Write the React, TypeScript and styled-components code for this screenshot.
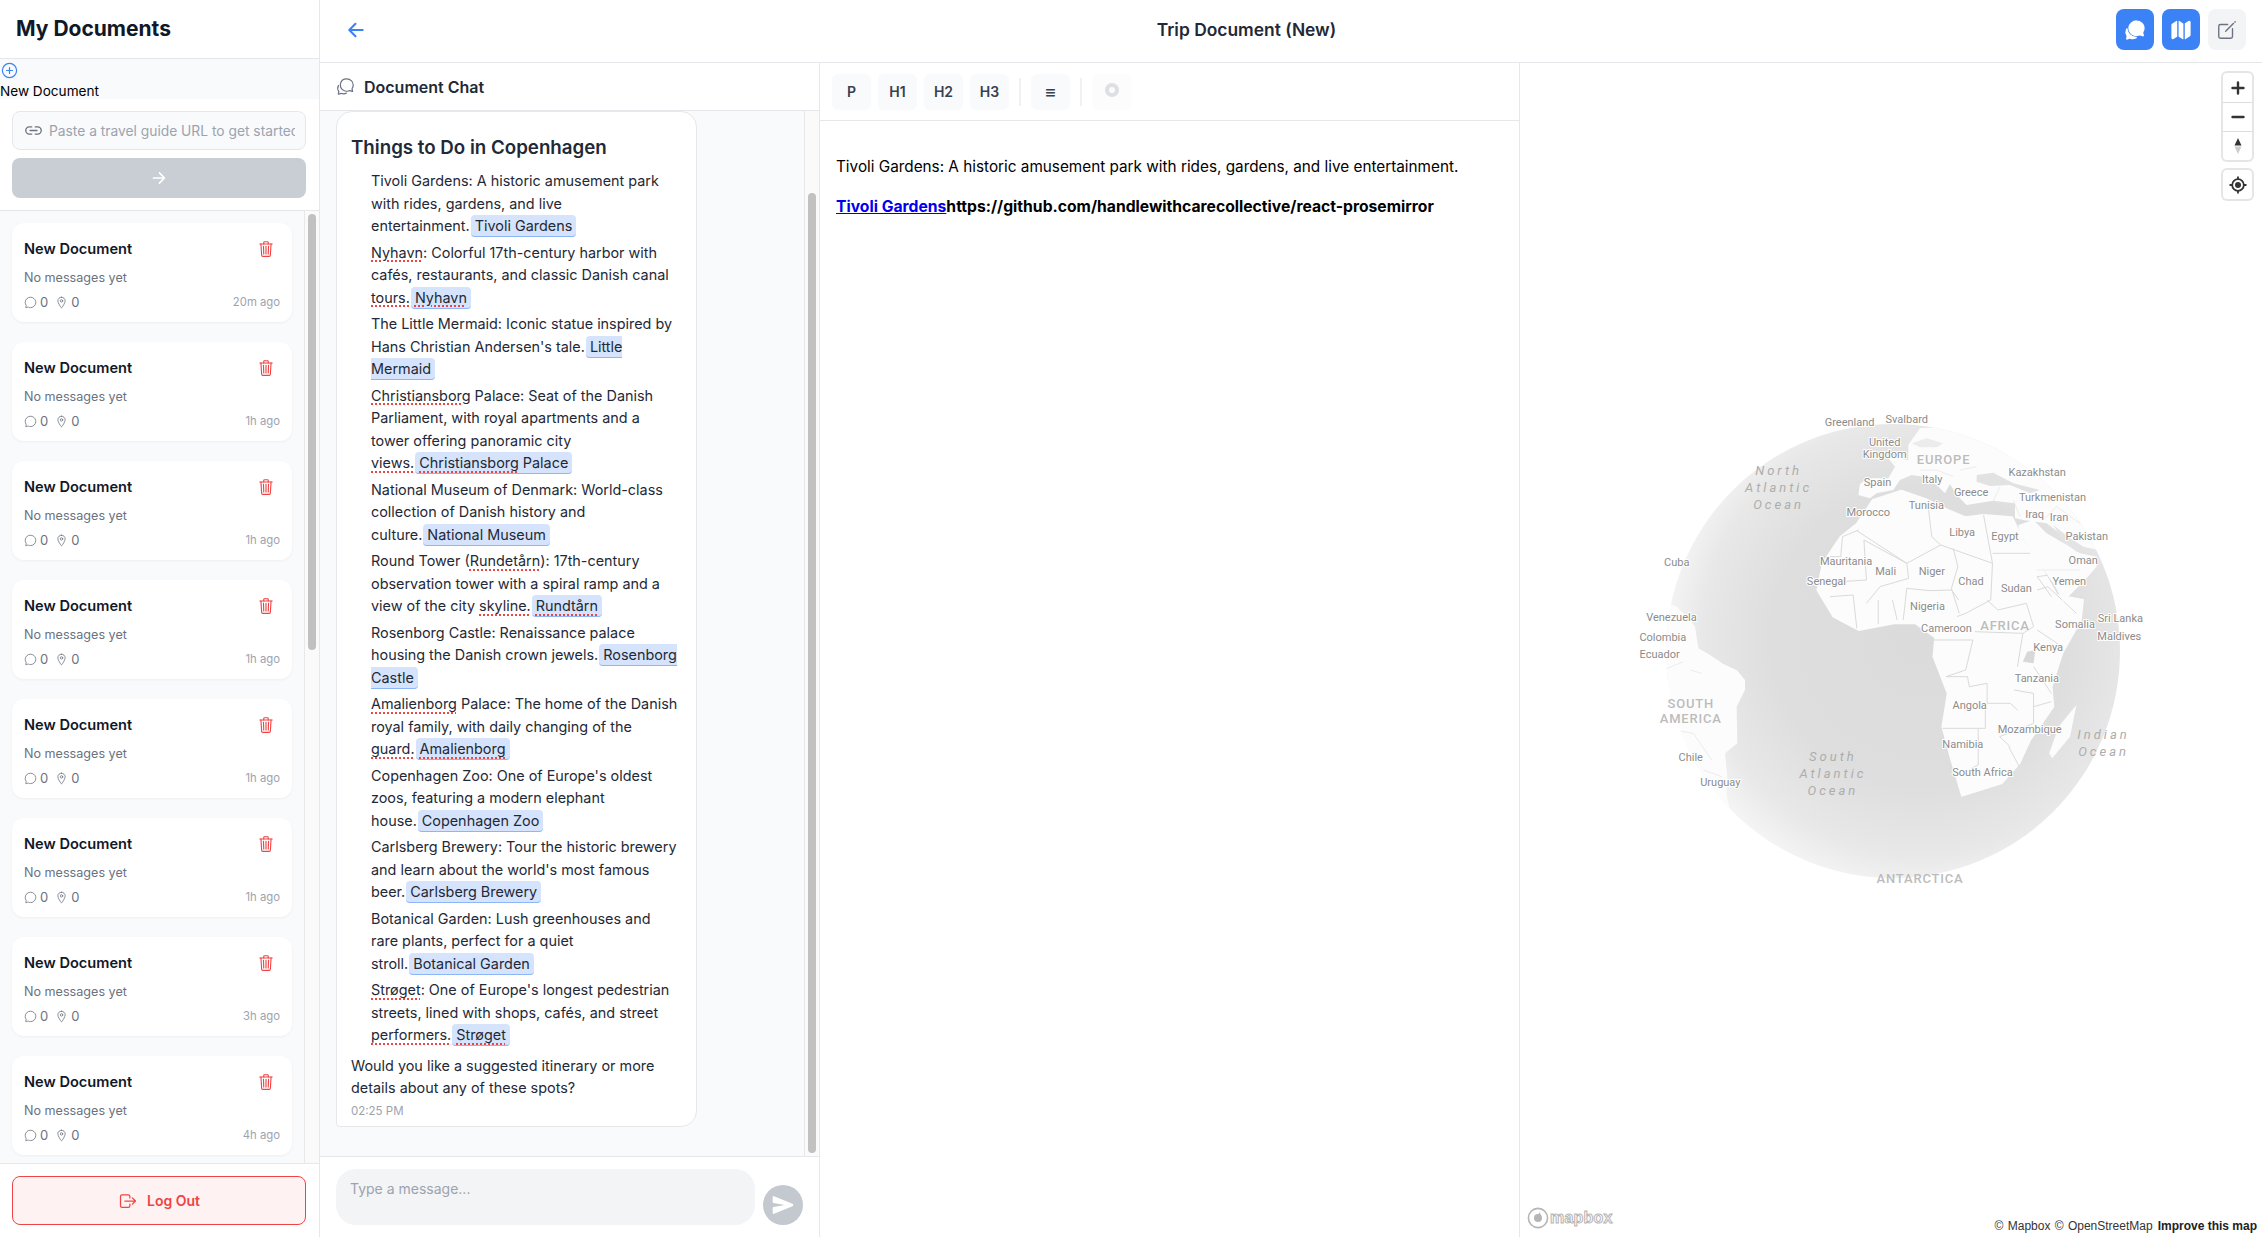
import React, { FC, ReactElement, ReactNode } from 'react';
import styled, { createGlobalStyle } from 'styled-components';
import {
    IoAddCircleOutline,
    IoArrowBack,
    IoArrowForward,
    IoChatbubbleOutline,
    IoChatbubbles,
    IoChatbubblesOutline,
    IoCreateOutline,
    IoLinkOutline,
    IoLocationOutline,
    IoLogOutOutline,
    IoMap,
    IoSend,
    IoTrashOutline,
} from 'react-icons/io5';

const GlobalStyle = createGlobalStyle`
    * {
        box-sizing: border-box;
    }

    html,
    body {
        height: 100%;
        margin: 0;
    }

    body {
        background: #fff;
        font-family: Inter, "Noto Sans", sans-serif;
        overflow: hidden;
    }
`;

const Page = styled.div`
    display: flex;
    height: 100vh;
    overflow: hidden;
`;

const Sidebar = styled.aside`
    border-right: 1px solid #e5e7eb;
    display: flex;
    flex: 0 0 320px;
    flex-direction: column;
    height: 100%;
`;

const SidebarHeader = styled.header`
    align-items: center;
    border-bottom: 1px solid #e5e7eb;
    display: flex;
    flex: 0 0 59px;
    padding: 0 16px 1px;
`;

const SidebarTitle = styled.h1`
    color: #111827;
    font-size: 21px;
    font-weight: 700;
    margin: 0;
`;

const NewDocButton = styled.button`
    align-items: flex-start;
    background: #f9fafb;
    border: 0;
    color: #000;
    display: flex;
    flex: 0 0 40px;
    flex-direction: column;
    font-family: inherit;
    font-size: 13.6px;
    line-height: 16px;
    padding: 2px 0 0;

    svg {
        color: #3b82f6;
        display: block;
        height: 19px;
        margin-bottom: 3px;
        width: 19px;
    }
`;

const UrlSection = styled.div`
    border-bottom: 1px solid #e5e7eb;
    display: flex;
    flex: 0 0 112px;
    flex-direction: column;
    gap: 8px;
    padding: 12px 13px 11px 12px;
`;

const UrlField = styled.label`
    align-items: center;
    background: #f9fafb;
    border: 1px solid #e5e7eb;
    border-radius: 8px;
    color: #6b7280;
    display: flex;
    flex: 0 0 39px;
    gap: 6px;
    padding: 0 10px 0 11px;
`;

const UrlInput = styled.input`
    background: transparent;
    border: 0;
    color: #111827;
    flex: 1;
    font-family: inherit;
    font-size: 13.8px;
    min-width: 0;
    outline: 0;
    padding: 0;

    &::placeholder {
        color: #9ca3af;
        opacity: 1;
    }
`;

const UrlSubmit = styled.button`
    align-items: center;
    background: #c9cdd4;
    border: 0;
    border-radius: 8px;
    color: #fff;
    display: flex;
    flex: 0 0 40px;
    justify-content: center;
`;

const ScrollPane = styled.div<{ $tint?: boolean }>`
    background: #f9fafb;
    display: flex;
    flex: 1;
    min-height: 0;
`;

const DocList = styled.div`
    flex: 1;
    min-width: 0;
    overflow: hidden;
    padding: 12px 12px 0;
`;

const ScrollTrack = styled.div`
    background: #fafafa;
    border-left: 1px solid #e8e8e8;
    flex: 0 0 15px;
    padding-left: 3px;
`;

const ScrollThumb = styled.div<{ $top: number; $height: number }>`
    background: #c1c1c1;
    border-radius: 4px;
    height: ${({ $height }) => $height}px;
    margin-top: ${({ $top }) => $top}px;
    width: 8px;
`;

const DocCard = styled.article`
    background: #fff;
    border-radius: 12px;
    box-shadow: 0 1px 3px rgba(0, 0, 0, 0.05);
    display: flex;
    flex-direction: column;
    height: 99px;
    margin-bottom: 20px;
    padding: 16px 12px 11px;
`;

const CardTop = styled.div`
    align-items: center;
    display: flex;
    height: 20px;
    justify-content: space-between;
`;

const CardTitle = styled.h2`
    color: #111827;
    font-size: 14.6px;
    font-weight: 600;
    margin: 0;
`;

const TrashButton = styled.span`
    color: #ef4444;
    display: flex;
    margin-right: 5px;
`;

const CardPreview = styled.p`
    color: #6b7280;
    font-size: 12.6px;
    line-height: 18px;
    margin: 10px 0 0;
`;

const CardStats = styled.div`
    align-items: center;
    color: #6b7280;
    display: flex;
    font-size: 13px;
    height: 18px;
    margin-top: 6px;
`;

const Stat = styled.span`
    align-items: center;
    display: flex;
    gap: 3px;
    margin-right: 7px;
`;

const CardTime = styled.span`
    color: #9ca3af;
    font-size: 11.3px;
    margin-left: auto;
`;

const SidebarFooter = styled.footer`
    border-top: 1px solid #e5e7eb;
    flex: 0 0 74px;
    padding: 12px 13px 12px 12px;
`;

const LogoutButton = styled.button`
    align-items: center;
    background: #fef2f2;
    border: 1px solid #ef4444;
    border-radius: 8px;
    color: #ef4444;
    display: flex;
    font-family: inherit;
    font-size: 14px;
    font-weight: 600;
    gap: 9px;
    height: 49px;
    justify-content: center;
    width: 100%;
`;

const Main = styled.main`
    display: flex;
    flex: 1;
    flex-direction: column;
    min-width: 0;
`;

const TopBar = styled.header`
    align-items: center;
    border-bottom: 1px solid #e5e7eb;
    display: flex;
    flex: 0 0 63px;
    justify-content: space-between;
    padding: 0 16px 3px 25px;
`;

const BackButton = styled.span`
    color: #3b82f6;
    display: flex;
    margin-right: 10px;
`;

const DocTitle = styled.h2`
    color: #1f2937;
    font-size: 17.4px;
    font-weight: 600;
    margin: 0;
`;

const TopActions = styled.div`
    display: flex;
    gap: 8px;
`;

const ToggleButton = styled.button<{ $active?: boolean }>`
    align-items: center;
    background: ${({ $active }) => ($active ? '#3b82f6' : '#f3f4f6')};
    border: 0;
    border-radius: 8px;
    color: ${({ $active }) => ($active ? '#fff' : '#6b7280')};
    display: flex;
    height: 41px;
    justify-content: center;
    padding: 0;
    width: 38px;
`;

const Workspace = styled.div`
    display: flex;
    flex: 1;
    min-height: 0;
`;

const ChatPanel = styled.section`
    border-right: 1px solid #e5e7eb;
    display: flex;
    flex: 0 0 500px;
    flex-direction: column;
`;

const ChatHeader = styled.header`
    align-items: center;
    border-bottom: 1px solid #e5e7eb;
    color: #1f2937;
    display: flex;
    flex: 0 0 48px;
    font-size: 16px;
    font-weight: 600;
    gap: 9px;
    padding: 0 16px;

    svg {
        color: #6b7280;
    }
`;

const ChatMessages = styled.div`
    flex: 1;
    min-width: 0;
    overflow: hidden;
    padding-left: 16px;
`;

const AssistantBubble = styled.div`
    background: #fff;
    border: 1px solid #e5e7eb;
    border-radius: 16px 16px 16px 4px;
    color: #1f2937;
    font-size: 14.4px;
    line-height: 22.5px;
    padding: 21px 16px 6px 14px;
    width: 361px;
`;

const BubbleHeading = styled.h3`
    font-size: 18.72px;
    font-weight: 600;
    line-height: 30px;
    margin: 0 0 7px;
`;

const PlaceList = styled.ul`
    list-style: none;
    margin: 0 0 8px;
    padding: 0 0 0 20px;
`;

const PlaceItem = styled.li`
    margin-bottom: 4px;
`;

const Misspelt = styled.span`
    text-decoration: underline dotted #ef4444 1.5px;
    text-underline-offset: 3px;
`;

const PlaceChip = styled.span`
    background: #d5e4fc;
    border-bottom: 1px solid #8db6f8;
    border-radius: 4px;
    margin-left: 1px;
    padding: 2px 4px;
`;

const BubbleText = styled.p`
    margin: 0;
`;

const BubbleTime = styled.time`
    color: #9ca3af;
    display: block;
    font-size: 11.5px;
    line-height: 18px;
    margin-top: 2px;
`;

const Composer = styled.div`
    align-items: flex-end;
    border-top: 1px solid #e5e7eb;
    display: flex;
    flex: 0 0 81px;
    gap: 8px;
    padding: 12px 16px;
`;

const MessageInput = styled.textarea`
    background: #f3f4f6;
    border: 0;
    border-radius: 20px;
    color: #111827;
    flex: 0 0 419px;
    font-family: inherit;
    font-size: 14px;
    height: 56px;
    outline: 0;
    padding: 11px 14px;
    resize: none;

    &::placeholder {
        color: #9ca3af;
        opacity: 1;
    }
`;

const SendButton = styled.button`
    align-items: center;
    background: #c4c9d0;
    border: 0;
    border-radius: 50%;
    color: #fff;
    display: flex;
    flex: 0 0 40px;
    height: 40px;
    justify-content: center;
    padding: 0;
`;

const EditorPanel = styled.section`
    border-right: 1px solid #e5e7eb;
    display: flex;
    flex: 0 0 700px;
    flex-direction: column;
`;

const EditorToolbar = styled.div`
    align-items: center;
    border-bottom: 1px solid #e5e7eb;
    display: flex;
    flex: 0 0 58px;
    gap: 7px;
    padding: 0 12px;
`;

const ToolButton = styled.button<{ $disabled?: boolean; $glyph?: boolean }>`
    align-items: center;
    background: ${({ $disabled }) => ($disabled ? '#fcfcfd' : '#f9fafb')};
    border: 0;
    border-radius: 6px;
    color: #374151;
    display: flex;
    flex: 0 0 39px;
    font-family: ${({ $glyph }) => ($glyph ? '"DejaVu Sans", sans-serif' : 'inherit')};
    font-size: 14px;
    font-weight: 600;
    height: 36px;
    justify-content: center;
    padding: 0;
`;

const ToolDivider = styled.span`
    background: #f0f1f3;
    flex: 0 0 2px;
    height: 28px;
    margin: 0 3px;
`;

const DisabledDot = styled.span`
    border: 4px solid #dcdfe4;
    border-radius: 50%;
    display: block;
    height: 14px;
    margin-top: -4px;
    width: 14px;
`;

const EditorBody = styled.div`
    color: #000;
    flex: 1;
    font-size: 15.3px;
    line-height: 24px;
    padding: 34px 16px;
`;

const EditorLine = styled.p`
    margin: 0 0 16px;
`;

const EditorStrong = styled.b`
    font-size: 15.7px;
`;

const EditorLink = styled.a`
    color: #0000ee;
    font-size: 15.7px;
    font-weight: 700;
    text-decoration: underline;
`;

const MapPanel = styled.section`
    flex: 1;
    min-width: 0;
    position: relative;
`;

const MapCanvas = styled.svg`
    display: block;
    height: 100%;
    width: 100%;
`;

const MapLabel = styled.text<{ $kind: LabelKind }>`
    dominant-baseline: central;
    fill: ${({ $kind }) => ($kind === 'place' ? '#8b8b8b' : $kind === 'continent' ? '#bcbcbc' : '#adadad')};
    font-family: Roboto, "Liberation Sans", sans-serif;
    font-size: ${({ $kind }) => ($kind === 'place' ? '11px' : '13px')};
    font-style: ${({ $kind }) => ($kind === 'ocean' ? 'italic' : 'normal')};
    font-weight: ${({ $kind }) => ($kind === 'continent' ? 500 : 400)};
    letter-spacing: ${({ $kind }) => ($kind === 'ocean' ? '3px' : $kind === 'continent' ? '0.8px' : '0')};
    paint-order: stroke;
    stroke: #fff;
    stroke-width: ${({ $kind }) => ($kind === 'place' ? '2px' : '0')};
    text-anchor: middle;
`;

const MapControls = styled.div`
    display: flex;
    flex-direction: column;
    gap: 10px;
    position: absolute;
    right: 10px;
    top: 10px;
`;

const ControlGroup = styled.div`
    background: #fff;
    border-radius: 4px;
    box-shadow: 0 0 0 2px rgba(0, 0, 0, 0.1);
    display: flex;
    flex-direction: column;
    width: 29px;
`;

const ControlButton = styled.button`
    align-items: center;
    background: transparent;
    border: 0;
    display: flex;
    height: 29px;
    justify-content: center;
    padding: 0;

    & + & {
        border-top: 1px solid #ddd;
    }
`;

const MapboxLogo = styled.div`
    align-items: center;
    bottom: 8px;
    display: flex;
    gap: 1px;
    left: 7px;
    position: absolute;
`;

const MapboxWord = styled.span`
    -webkit-text-stroke: 1px #b5b5b5;
    color: #fff;
    font-family: "Liberation Sans", sans-serif;
    font-size: 16px;
    font-weight: 700;
    letter-spacing: 0.2px;
`;

const Attribution = styled.div`
    bottom: 3px;
    color: #333;
    font-family: "Liberation Sans", sans-serif;
    font-size: 12px;
    line-height: 16px;
    position: absolute;
    right: 5px;
    white-space: nowrap;
    word-spacing: 1px;
`;

const ImproveLink = styled.b`
    color: #222;
    margin-left: 5px;
    word-spacing: 0;
`;

type LabelKind = 'place' | 'continent' | 'ocean';

const docTimes = ['20m ago', '1h ago', '1h ago', '1h ago', '1h ago', '1h ago', '3h ago', '4h ago'];

const places: ReactNode[] = [
    <>
        Tivoli Gardens: A historic amusement park with rides, gardens, and live entertainment.
        <PlaceChip>Tivoli Gardens</PlaceChip>
    </>,
    <>
        <Misspelt>Nyhavn</Misspelt>: Colorful 17th-century harbor with cafés, restaurants, and classic Danish canal{' '}
        <Misspelt>tours.</Misspelt>
        <PlaceChip>
            <Misspelt>Nyhavn</Misspelt>
        </PlaceChip>
    </>,
    <>
        The Little Mermaid: Iconic statue inspired by Hans Christian Andersen's tale.
        <PlaceChip>Little Mermaid</PlaceChip>
    </>,
    <>
        <Misspelt>Christiansborg</Misspelt> Palace: Seat of the Danish Parliament, with royal apartments and a tower offering panoramic city{' '}
        <Misspelt>views.</Misspelt>
        <PlaceChip>
            <Misspelt>Christiansborg</Misspelt> Palace
        </PlaceChip>
    </>,
    <>
        National Museum of Denmark: World-class collection of Danish history and culture.
        <PlaceChip>National Museum</PlaceChip>
    </>,
    <>
        Round Tower (<Misspelt>Rundetårn</Misspelt>): 17th-century observation tower with a spiral ramp and a view of the city{' '}
        <Misspelt>skyline.</Misspelt>
        <PlaceChip>
            <Misspelt>Rundtårn</Misspelt>
        </PlaceChip>
    </>,
    <>
        Rosenborg Castle: Renaissance palace housing the Danish crown jewels.
        <PlaceChip>Rosenborg Castle</PlaceChip>
    </>,
    <>
        <Misspelt>Amalienborg</Misspelt> Palace: The home of the Danish royal family, with daily changing of the <Misspelt>guard.</Misspelt>
        <PlaceChip>
            <Misspelt>Amalienborg</Misspelt>
        </PlaceChip>
    </>,
    <>
        Copenhagen Zoo: One of Europe's oldest zoos, featuring a modern elephant house.
        <PlaceChip>Copenhagen Zoo</PlaceChip>
    </>,
    <>
        Carlsberg Brewery: Tour the historic brewery and learn about the world's most famous beer.
        <PlaceChip>Carlsberg Brewery</PlaceChip>
    </>,
    <>
        Botanical Garden: Lush greenhouses and rare plants, perfect for a quiet stroll.
        <PlaceChip>Botanical Garden</PlaceChip>
    </>,
    <>
        <Misspelt>Strøget</Misspelt>: One of Europe's longest pedestrian streets, lined with shops, cafés, and street{' '}
        <Misspelt>performers.</Misspelt>
        <PlaceChip>
            <Misspelt>Strøget</Misspelt>
        </PlaceChip>
    </>,
];

// label centres, measured on a crop at 2.8x / 3x
const mapLabels: [string, number, number, LabelKind][] = [
    ['Greenland', 615, 67, 'place'],
    ['Svalbard', 775, 57, 'place'],
    ['United', 713, 127, 'place'],
    ['Kingdom', 713, 162, 'place'],
    ['EUROPE', 878, 179, 'continent'],
    ['Kazakhstan', 1140, 218, 'place'],
    ['Italy', 846, 237, 'place'],
    ['Spain', 693, 246, 'place'],
    ['Greece', 955, 276, 'place'],
    ['Turkmenistan', 1183, 291, 'place'],
    ['Tunisia', 830, 317, 'place'],
    ['Morocco', 667, 336, 'place'],
    ['Iraq', 1133, 342, 'place'],
    ['Iran', 1201, 353, 'place'],
    ['Libya', 930, 397, 'place'],
    ['Egypt', 1050, 408, 'place'],
    ['Pakistan', 1279, 409, 'place'],
    ['Oman', 1269, 481, 'place'],
    ['Cuba', 131, 486, 'place'],
    ['Mauritania', 605, 485, 'place'],
    ['Mali', 716, 515, 'place'],
    ['Niger', 845, 515, 'place'],
    ['Senegal', 550, 544, 'place'],
    ['Chad', 955, 543, 'place'],
    ['Yemen', 1230, 543, 'place'],
    ['Sudan', 1082, 565, 'place'],
    ['Nigeria', 833, 619, 'place'],
    ['Venezuela', 116, 653, 'place'],
    ['Sri Lanka', 1373, 656, 'place'],
    ['Somalia', 1246, 673, 'place'],
    ['AFRICA', 1050, 675, 'continent'],
    ['Cameroon', 886, 684, 'place'],
    ['Colombia', 92, 711, 'place'],
    ['Maldives', 1370, 710, 'place'],
    ['Kenya', 1171, 743, 'place'],
    ['Ecuador', 83, 764, 'place'],
    ['Tanzania', 1139, 834, 'place'],
    ['SOUTH', 170, 911, 'continent'],
    ['Angola', 951, 915, 'place'],
    ['AMERICA', 170, 954, 'continent'],
    ['Mozambique', 1119, 988, 'place'],
    ['Namibia', 932, 1032, 'place'],
    ['Chile', 170, 1073, 'place'],
    ['South Africa', 987, 1116, 'place'],
    ['Uruguay', 253, 1148, 'place'],
    ['ANTARCTICA', 812, 1435, 'continent'],
    ['North', 416, 211, 'ocean'],
    ['Atlantic', 416, 262, 'ocean'],
    ['Ocean', 416, 313, 'ocean'],
    ['South', 568, 1069, 'ocean'],
    ['Atlantic', 568, 1120, 'ocean'],
    ['Ocean', 568, 1172, 'ocean'],
    ['Indian', 1326, 1004, 'ocean'],
    ['Ocean', 1326, 1053, 'ocean'],
];

const africaBorders = [
    'M635,392 L775,490 L870,435 L1015,490 L990,345',
    'M835,320 L845,410 L870,435',
    'M1015,460 L1120,460',
    'M640,390 L595,410 L590,470 L535,470',
    'M655,420 L662,540 L590,545',
    'M655,420 L775,490 L780,535 L700,560 L662,610',
    'M905,445 L918,500 L900,565 L922,640',
    'M1015,490 L1010,600 L940,640 L915,650',
    'M775,565 L840,572 L900,570 L920,600',
    'M775,565 L765,660',
    'M695,600 L695,672',
    'M735,600 L748,660',
    'M560,590 L625,585 L635,685',
    'M1000,600 L1030,630 L1110,610 L1130,680 L1100,700 L1085,800',
    'M965,695 L1100,700',
    'M850,720 L960,720 L940,810 L885,830 L945,830 L950,860 L1000,850 L1000,910 L1065,910 L1085,930',
    'M995,920 L995,985 L875,985',
    'M975,985 L975,1095 L955,1105',
    'M1065,1040 L1035,1010 L1130,970 L1130,880 L1075,870',
    'M1140,690 L1210,740',
    'M1130,800 L1180,880',
    'M1180,905 L1130,920',
    'M1140,570 L1170,560 L1250,640',
    'M1210,520 L1140,530 L1180,590',
    'M1090,1100 L1060,1040',
];

const GlobeMap: FC = (): ReactElement => (
    <MapCanvas viewBox="1520 63 742 1174" aria-label="Map">
        <defs>
            <radialGradient id="globe-shade" cx="0.56" cy="0.47" r="0.6">
                <stop offset="0" stopColor="#dbdbdb" />
                <stop offset="0.55" stopColor="#dedede" />
                <stop offset="0.8" stopColor="#e8e8e8" />
                <stop offset="1" stopColor="#fafafa" />
            </radialGradient>
            <clipPath id="globe-clip">
                <circle cx="1893" cy="651" r="227" />
            </clipPath>
        </defs>
        <circle cx="1893" cy="651" r="227" fill="url(#globe-shade)" />
        <g clipPath="url(#globe-clip)">
            {/* South America */}
            <g transform="translate(1640 590) scale(0.3333)">
                <path
                    d="M85,40 L110,50 L150,90 L165,110 L175,175 L210,195 L250,222 L290,240 L315,270 L315,300 L290,350 L292,460 L255,490 L262,560 L260,620 L270,660 L220,620 L130,500 L60,340 L50,100 Z"
                    fill="#fcfcfc"
                />
                <path d="M70,240 L130,215 M150,240 L185,250 M100,420 L160,430 L215,510 M190,540 L245,560" fill="none" stroke="#ececec" strokeWidth="3" />
            </g>
            {/* Africa, Madagascar */}
            <g transform="translate(1630 400) scale(0.35714 0.33333)">
                <path
                    d="M680,300 L760,272 L830,298 L890,330 L940,352 L990,345 L1070,352 L1100,420 L1150,500 L1195,585 L1268,600 L1262,660 L1210,760 L1180,860 L1185,920 L1120,1020 L1090,1090 L1040,1150 L930,1187 L900,1080 L875,980 L890,880 L850,770 L855,712 L800,670 L740,670 L640,690 L570,650 L525,570 L540,490 L590,410 L635,372 Z"
                    fill="#fcfcfc"
                    stroke="#fcfcfc"
                    strokeLinejoin="round"
                    strokeWidth="6"
                />
                <path d="M1250,915 L1232,1010 L1182,1075 L1174,1060 L1200,980 Z" fill="#fcfcfc" />
                <path d="M1112,755 L1135,750 L1130,790 L1100,785 Z" fill="#d8d8d8" />
                {africaBorders.map(d => (
                    <path key={d} d={d} fill="none" stroke="#dadada" strokeWidth="1" vectorEffect="non-scaling-stroke" />
                ))}
            </g>
            {/* Europe, Middle East */}
            <g transform="translate(1780 410) scale(0.3333)">
                <path
                    d="M235,255 L240,222 L262,205 L325,205 L345,170 L322,140 L385,150 L385,105 L420,55 L500,50 L640,110 L780,170 L900,300 L1000,430 L885,405 L800,340 L730,330 L705,325 L705,280 L640,272 L560,285 L530,255 L510,222 L495,250 L470,225 L430,200 L395,195 L360,210 L340,240 L290,250 L270,265 Z"
                    fill="#fcfcfc"
                />
                <path d="M715,345 L760,330 L800,370 L870,410 L900,430 L950,440 L950,470 L915,510 L850,575 L820,520 L770,450 L720,370 Z" fill="#fcfcfc" />
                <path d="M590,195 L640,188 L700,220 L780,240 L750,250 L690,225 L630,228 L590,215 Z" fill="#e2e2e2" />
                <path d="M395,100 L440,85 L490,100 L470,112 L420,112 Z" fill="#ececec" />
                <path d="M820,345 L870,385 L935,425 L890,425 L850,395 Z" fill="#e4e4e4" />
                <path d="M420,180 L470,180 L520,200 M540,180 L590,170 M700,270 L720,320 M640,272 L660,230 M790,330 L830,290 L900,340 M770,480 L860,480 L900,480" fill="none" stroke="#ececec" strokeWidth="3" />
            </g>
        </g>
        {mapLabels.map(([name, x, y, kind]) => (
            <MapLabel key={`${name}-${x}-${y}`} $kind={kind} x={1630 + x / 2.8} y={400 + y / 3}>
                {name}
            </MapLabel>
        ))}
    </MapCanvas>
);

const DocumentCard: FC<{ time: string }> = ({ time }: { time: string }): ReactElement => (
    <DocCard>
        <CardTop>
            <CardTitle>New Document</CardTitle>
            <TrashButton>
                <IoTrashOutline size={18} />
            </TrashButton>
        </CardTop>
        <CardPreview>No messages yet</CardPreview>
        <CardStats>
            <Stat>
                <IoChatbubbleOutline size={13} /> 0
            </Stat>
            <Stat>
                <IoLocationOutline size={13} /> 0
            </Stat>
            <CardTime>{time}</CardTime>
        </CardStats>
    </DocCard>
);

const App: FC = (): ReactElement => (
    <Page>
        <GlobalStyle />
        <Sidebar>
            <SidebarHeader>
                <SidebarTitle>My Documents</SidebarTitle>
            </SidebarHeader>
            <NewDocButton type="button">
                <IoAddCircleOutline />
                New Document
            </NewDocButton>
            <UrlSection>
                <UrlField>
                    <IoLinkOutline size={19} />
                    <UrlInput placeholder="Paste a travel guide URL to get started" />
                </UrlField>
                <UrlSubmit type="button">
                    <IoArrowForward size={18} />
                </UrlSubmit>
            </UrlSection>
            <ScrollPane>
                <DocList>
                    {docTimes.map((time, i) => (
                        <DocumentCard key={i} time={time} />
                    ))}
                </DocList>
                <ScrollTrack>
                    <ScrollThumb $top={3} $height={436} />
                </ScrollTrack>
            </ScrollPane>
            <SidebarFooter>
                <LogoutButton type="button">
                    <IoLogOutOutline size={20} />
                    Log Out
                </LogoutButton>
            </SidebarFooter>
        </Sidebar>
        <Main>
            <TopBar>
                <BackButton>
                    <IoArrowBack size={22} />
                </BackButton>
                <DocTitle>Trip Document (New)</DocTitle>
                <TopActions>
                    <ToggleButton $active type="button">
                        <IoChatbubbles size={22} />
                    </ToggleButton>
                    <ToggleButton $active type="button">
                        <IoMap size={22} />
                    </ToggleButton>
                    <ToggleButton type="button">
                        <IoCreateOutline size={22} />
                    </ToggleButton>
                </TopActions>
            </TopBar>
            <Workspace>
                <ChatPanel>
                    <ChatHeader>
                        <IoChatbubblesOutline size={19} />
                        Document Chat
                    </ChatHeader>
                    <ScrollPane>
                        <ChatMessages>
                            <AssistantBubble>
                                <BubbleHeading>Things to Do in Copenhagen</BubbleHeading>
                                <PlaceList>
                                    {places.map((place, i) => (
                                        <PlaceItem key={i}>{place}</PlaceItem>
                                    ))}
                                </PlaceList>
                                <BubbleText>Would you like a suggested itinerary or more details about any of these spots?</BubbleText>
                                <BubbleTime>02:25 PM</BubbleTime>
                            </AssistantBubble>
                        </ChatMessages>
                        <ScrollTrack>
                            <ScrollThumb $top={82} $height={960} />
                        </ScrollTrack>
                    </ScrollPane>
                    <Composer>
                        <MessageInput placeholder="Type a message..." />
                        <SendButton type="button">
                            <IoSend size={22} />
                        </SendButton>
                    </Composer>
                </ChatPanel>
                <EditorPanel>
                    <EditorToolbar>
                        <ToolButton type="button">P</ToolButton>
                        <ToolButton type="button">H1</ToolButton>
                        <ToolButton type="button">H2</ToolButton>
                        <ToolButton type="button">H3</ToolButton>
                        <ToolDivider />
                        <ToolButton $glyph type="button">≡</ToolButton>
                        <ToolDivider />
                        <ToolButton $disabled type="button">
                            <DisabledDot />
                        </ToolButton>
                    </EditorToolbar>
                    <EditorBody>
                        <EditorLine>Tivoli Gardens: A historic amusement park with rides, gardens, and live entertainment.</EditorLine>
                        <EditorLine>
                            <EditorLink href="#">Tivoli Gardens</EditorLink>
                            <EditorStrong>https://github.com/handlewithcarecollective/react-prosemirror</EditorStrong>
                        </EditorLine>
                    </EditorBody>
                </EditorPanel>
                <MapPanel>
                    <GlobeMap />
                    <MapControls>
                        <ControlGroup>
                            <ControlButton type="button" aria-label="Zoom in">
                                <svg width="14" height="14" viewBox="0 0 14 14">
                                    <path d="M7 1.5v11M1.5 7h11" stroke="#333" strokeWidth="2.4" strokeLinecap="round" />
                                </svg>
                            </ControlButton>
                            <ControlButton type="button" aria-label="Zoom out">
                                <svg width="14" height="14" viewBox="0 0 14 14">
                                    <path d="M1.5 7h11" stroke="#333" strokeWidth="2.4" strokeLinecap="round" />
                                </svg>
                            </ControlButton>
                            <ControlButton type="button" aria-label="Reset bearing">
                                <svg width="10" height="18" viewBox="0 0 10 18">
                                    <path d="M5 1L8.5 8.5H1.5Z" fill="#333" />
                                    <path d="M5 17L8.5 9.5H1.5Z" fill="#ccc" />
                                </svg>
                            </ControlButton>
                        </ControlGroup>
                        <ControlGroup>
                            <ControlButton type="button" aria-label="Find my location">
                                <svg width="18" height="18" viewBox="0 0 18 18">
                                    <circle cx="9" cy="9" r="5.8" fill="none" stroke="#333" strokeWidth="1.8" />
                                    <circle cx="9" cy="9" r="3" fill="#333" />
                                    <path d="M9 0.5v2.5M9 15v2.5M0.5 9h2.5M15 9h2.5" stroke="#333" strokeWidth="1.8" />
                                </svg>
                            </ControlButton>
                        </ControlGroup>
                    </MapControls>
                    <MapboxLogo>
                        <svg width="22" height="22" viewBox="0 0 22 22">
                            <circle cx="11" cy="11" r="9.6" fill="#fff" stroke="#b5b5b5" strokeWidth="1.6" />
                            <circle cx="11" cy="11" r="4" fill="#b5b5b5" />
                            <path d="M13 5l1 5-5 1z" fill="#b5b5b5" />
                        </svg>
                        <MapboxWord>mapbox</MapboxWord>
                    </MapboxLogo>
                    <Attribution>
                        © Mapbox © OpenStreetMap
                        <ImproveLink>Improve this map</ImproveLink>
                    </Attribution>
                </MapPanel>
            </Workspace>
        </Main>
    </Page>
);

export default App;
